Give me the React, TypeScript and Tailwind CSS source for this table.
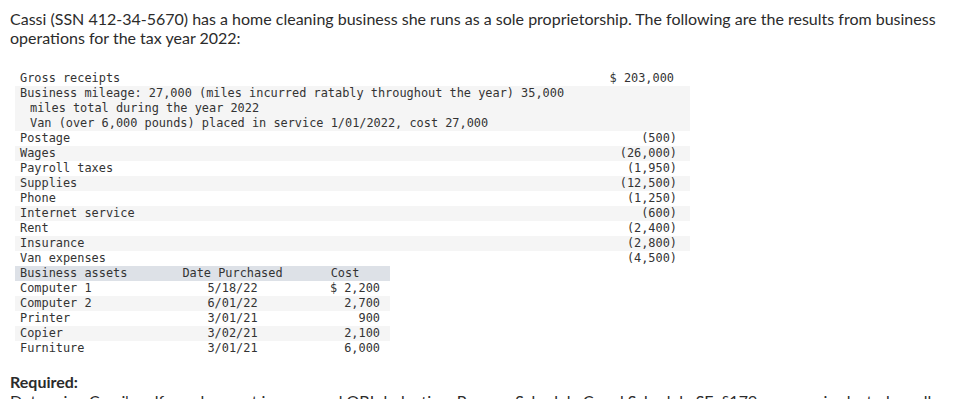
const expenses: [string, string][] = [
  ['Postage', '(500)'],
  ['Wages', '(26,000)'],
  ['Payroll taxes', '(1,950)'],
  ['Supplies', '(12,500)'],
  ['Phone', '(1,250)'],
  ['Internet service', '(600)'],
  ['Rent', '(2,400)'],
  ['Insurance', '(2,800)'],
  ['Van expenses', '(4,500)'],
];

const assets: [string, string, string][] = [
  ['Computer 1', '5/18/22', '$ 2,200'],
  ['Computer 2', '6/01/22', '2,700'],
  ['Printer', '3/01/21', '900'],
  ['Copier', '3/02/21', '2,100'],
  ['Furniture', '3/01/21', '6,000'],
];

const mono = "font-['DejaVu_Sans_Mono',Consolas,monospace] text-[11.9px] leading-[15px] text-[#333]";

export default function App() {
  return (
    <div className="w-[975px] h-[399px] overflow-hidden bg-white font-['Lato',sans-serif] text-[#2b2b2b]">
      <p className="px-[10px] pt-[9px] text-[16px] leading-[19px]">
        Cassi (SSN 412-34-5670) has a home cleaning business she runs as a sole proprietorship. The following are the
        results from business operations for the tax year 2022:
      </p>

      <div className={`mt-[24px] ml-[15px] w-[675px] ${mono}`}>
        <div className="flex">
          <div className="flex-1 pl-[5px]">Gross receipts</div>
          <div className="pr-[16px]">$ 203,000</div>
        </div>
        <div className="bg-[#f5f5f5] pl-[5px]">
          <div>Business mileage: 27,000 (miles incurred ratably throughout the year) 35,000</div>
          <div className="pl-[10px]">miles total during the year 2022</div>
          <div className="pl-[10px]">Van (over 6,000 pounds) placed in service 1/01/2022, cost 27,000</div>
        </div>
        {expenses.map(([label, amount], i) => (
          <div key={label} className={`flex ${i % 2 === 1 ? 'bg-[#f5f5f5]' : ''}`}>
            <div className="flex-1 pl-[5px]">{label}</div>
            <div className="pr-[13px]">{amount}</div>
          </div>
        ))}
      </div>

      <div className={`ml-[15px] w-[375px] ${mono}`}>
        <div className="flex bg-[#dde1e7]">
          <div className="w-[150px] pl-[5px]">Business assets</div>
          <div className="w-[135px] text-center">Date Purchased</div>
          <div className="w-[90px] text-center">Cost</div>
        </div>
        {assets.map(([name, date, cost], i) => (
          <div key={name} className={`flex ${i % 2 === 1 ? 'bg-[#f5f5f5]' : ''}`}>
            <div className="w-[150px] pl-[5px]">{name}</div>
            <div className="w-[135px] text-center">{date}</div>
            <div className="w-[90px] text-right pr-[10px]">{cost}</div>
          </div>
        ))}
      </div>

      <div className="px-[10px] mt-[16px] text-[16px] leading-[19px]">
        <div className="font-bold">Required:</div>
        <p>
          Determine Cassi's self-employment income and QBI deduction. Prepare Schedule C and Schedule SE. §179 expense is
          elected on all eligible assets.
        </p>
      </div>
    </div>
  );
}
